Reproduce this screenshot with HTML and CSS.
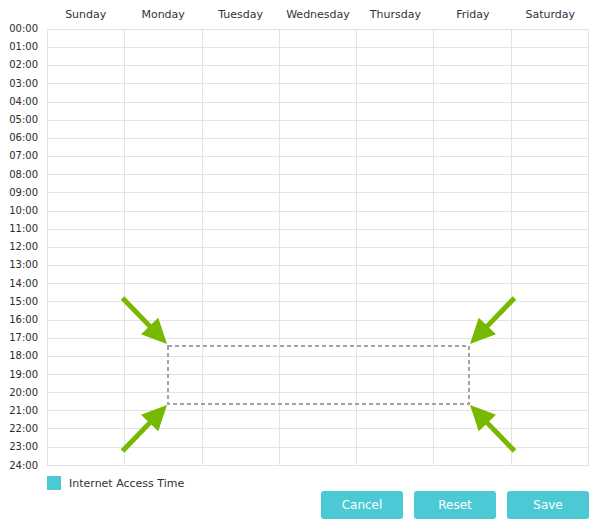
FILE: index.html
```html
<!DOCTYPE html>
<html lang="en">
<head>
  <meta charset="UTF-8" />
  <title>Internet Access Schedule</title>
  <link rel="stylesheet" href="styles.css">
</head>
<body>
  <div class="scheduler">
    <div class="days">
      <span>Sunday</span>
      <span>Monday</span>
      <span>Tuesday</span>
      <span>Wednesday</span>
      <span>Thursday</span>
      <span>Friday</span>
      <span>Saturday</span>
    </div>

    <div class="schedule-body">
      <div class="hours" id="hours"></div>
      <div class="grid">
        <table id="grid"></table>
        <svg class="overlay" width="542" height="437" viewBox="0 0 542 437">
          <rect class="selection" x="121" y="317" width="301" height="58" />
          <g class="arrow" transform="translate(120 315) rotate(46)">
            <line x1="-64" y1="0" x2="-20" y2="0" />
            <polygon points="0,0 -25,-12 -25,12" />
          </g>
          <g class="arrow" transform="translate(120 376) rotate(-46)">
            <line x1="-64" y1="0" x2="-20" y2="0" />
            <polygon points="0,0 -25,-12 -25,12" />
          </g>
          <g class="arrow" transform="translate(423 315) rotate(134)">
            <line x1="-64" y1="0" x2="-20" y2="0" />
            <polygon points="0,0 -25,-12 -25,12" />
          </g>
          <g class="arrow" transform="translate(423 376) rotate(-134)">
            <line x1="-64" y1="0" x2="-20" y2="0" />
            <polygon points="0,0 -25,-12 -25,12" />
          </g>
        </svg>
      </div>
    </div>

    <div class="legend">
      <span class="legend-swatch"></span>
      <span>Internet Access Time</span>
    </div>

    <div class="button-row">
      <button type="button">Cancel</button>
      <button type="button">Reset</button>
      <button type="button">Save</button>
    </div>
  </div>

  <script>
    const hours = document.getElementById("hours");
    const grid = document.getElementById("grid");

    for (let h = 0; h <= 24; h++) {
      const label = document.createElement("div");
      label.className = "hour";
      label.innerText = (h < 10 ? "0" + h : h) + ":00";
      hours.appendChild(label);
    }

    for (let r = 0; r < 24; r++) {
      const row = document.createElement("tr");
      for (let d = 0; d < 7; d++) {
        row.appendChild(document.createElement("td"));
      }
      grid.appendChild(row);
    }
  </script>
</body>
</html>
```

FILE: styles.css
```css
body {
  margin: 0;
  padding: 0;
  background-color: white;
  font-family: "DejaVu Sans", Verdana, sans-serif;
  color: #333;
}
.scheduler {
  width: 600px;
}
.days {
  display: grid;
  grid-template-columns: repeat(7, 1fr);
  width: 542px;
  height: 29px;
  margin-left: 47px;
  font-size: 11px;
  line-height: 30px;
  text-align: center;
}
.schedule-body {
  display: flex;
  align-items: flex-start;
}
.hours {
  width: 38px;
  padding-right: 9px;
  margin-top: -9px;
  margin-bottom: -9px;
  font-size: 10px;
  text-align: right;
  color: #2b2b2b;
}
.hour {
  height: 18.2px;
  line-height: 18.2px;
}
.grid {
  position: relative;
  width: 542px;
  height: 437px;
}
.grid table {
  width: 542px;
  height: 437px;
  border-collapse: collapse;
  table-layout: fixed;
  border: 1px solid #d9d9d9;
}
.grid td {
  border: 1px solid #e3e3e3;
  padding: 0;
}
.overlay {
  position: absolute;
  left: 0;
  top: 0;
}
.selection {
  fill: none;
  stroke: #a3a3a3;
  stroke-width: 2;
  stroke-dasharray: 4 3;
}
.arrow line {
  stroke: #76b900;
  stroke-width: 5;
}
.arrow polygon {
  fill: #76b900;
}
.legend {
  display: flex;
  align-items: center;
  gap: 8px;
  height: 14px;
  margin: 10px 0 0 47px;
  font-size: 11px;
}
.legend-swatch {
  width: 14px;
  height: 14px;
  background-color: #4bcad5;
}
.button-row {
  display: flex;
  justify-content: flex-end;
  gap: 11px;
  margin-top: 1px;
  padding-right: 11px;
}
.button-row button {
  width: 82px;
  height: 28px;
  border: none;
  border-radius: 3px;
  background-color: #4bcad5;
  color: white;
  font-family: "DejaVu Sans", Verdana, sans-serif;
  font-size: 12px;
  cursor: pointer;
}
```
